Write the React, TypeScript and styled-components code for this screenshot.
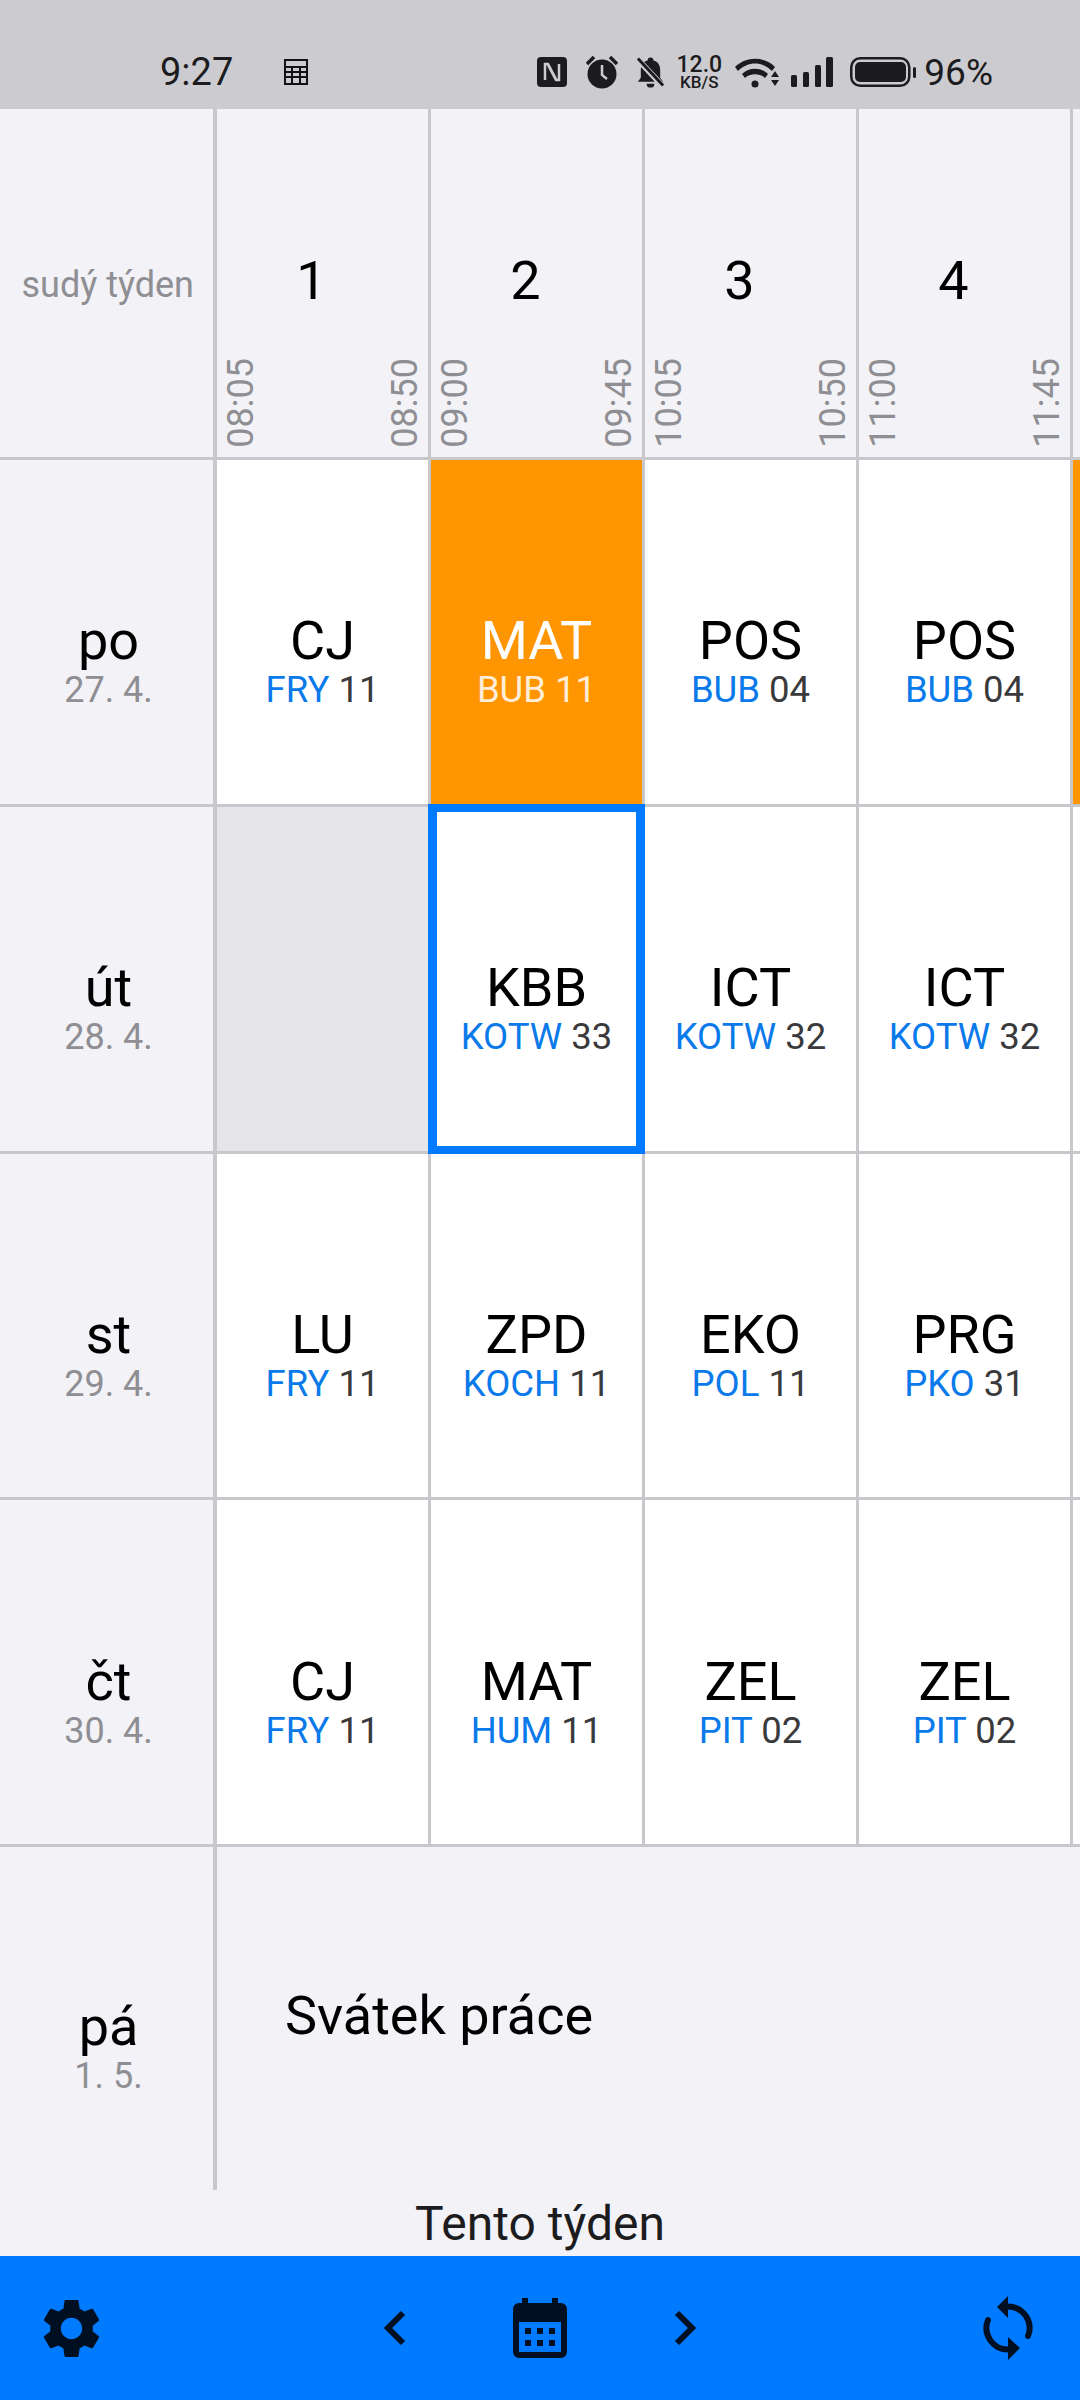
import styled, { createGlobalStyle } from "styled-components";
import { MdSettings } from "react-icons/md";

const GlobalStyle = createGlobalStyle`
  html, body {
    margin: 0;
    padding: 0;
    background: #f2f2f7;
    font-family: Roboto, "Liberation Sans", sans-serif;
  }
`;

type Lesson = { name: string; teacher: string; room: string; variant?: "changed" | "active" | "empty" };

const periods = [
  { n: 1, from: "08:05", to: "08:50" },
  { n: 2, from: "09:00", to: "09:45" },
  { n: 3, from: "10:05", to: "10:50" },
  { n: 4, from: "11:00", to: "11:45" },
];

const days: { name: string; date: string; lessons: Lesson[] }[] = [
  {
    name: "po",
    date: "27. 4.",
    lessons: [
      { name: "CJ", teacher: "FRY", room: "11" },
      { name: "MAT", teacher: "BUB", room: "11", variant: "changed" },
      { name: "POS", teacher: "BUB", room: "04" },
      { name: "POS", teacher: "BUB", room: "04" },
    ],
  },
  {
    name: "út",
    date: "28. 4.",
    lessons: [
      { name: "", teacher: "", room: "", variant: "empty" },
      { name: "KBB", teacher: "KOTW", room: "33", variant: "active" },
      { name: "ICT", teacher: "KOTW", room: "32" },
      { name: "ICT", teacher: "KOTW", room: "32" },
    ],
  },
  {
    name: "st",
    date: "29. 4.",
    lessons: [
      { name: "LU", teacher: "FRY", room: "11" },
      { name: "ZPD", teacher: "KOCH", room: "11" },
      { name: "EKO", teacher: "POL", room: "11" },
      { name: "PRG", teacher: "PKO", room: "31" },
    ],
  },
  {
    name: "čt",
    date: "30. 4.",
    lessons: [
      { name: "CJ", teacher: "FRY", room: "11" },
      { name: "MAT", teacher: "HUM", room: "11" },
      { name: "ZEL", teacher: "PIT", room: "02" },
      { name: "ZEL", teacher: "PIT", room: "02" },
    ],
  },
];

const ink = "#1c1c1e";
const statusBg = "#cbcbd0";

function StatusIcons() {
  return (
    <StatusRight>
      <StatusSvg $gap={0} width="30" height="30" viewBox="0 0 30 30">
        <rect width="30" height="30" rx="4" fill={ink} />
        <path d="M8 23V7h3l8 15M22 7v16h-3L11 8" stroke={statusBg} strokeWidth="2.5" fill="none" />
      </StatusSvg>
      <StatusSvg $gap={19} width="32" height="34" viewBox="0 0 32 34">
        <circle cx="16" cy="19" r="14.5" fill={ink} />
        <path d="M16 10v10l5 4" stroke={statusBg} strokeWidth="2.5" fill="none" />
        <path d="M1 9l7-7M31 9l-7-7" stroke={ink} strokeWidth="3.5" />
      </StatusSvg>
      <StatusSvg $gap={17} width="31" height="34" viewBox="0 0 32 34">
        <path fill={ink} d="M16 2a3 3 0 0 1 3 3c5 1 7 5 7 10v8l3 4H3l3-4v-8c0-5 2-9 7-10a3 3 0 0 1 3-3zM12 29h8a4 4 0 0 1-8 0z" />
        <path d="M3 4l26 28" stroke={statusBg} strokeWidth="6" />
        <path d="M3 3l26 28" stroke={ink} strokeWidth="3" />
      </StatusSvg>
      <Speed>
        <SpeedValue>12.0</SpeedValue>
        <SpeedUnit>KB/S</SpeedUnit>
      </Speed>
      <StatusSvg $gap={13} width="44" height="32" viewBox="0 0 44 32">
        <path fill={ink} d="M0 11C11 0 29 0 40 11l-3 4C27 5 13 5 3 15zM7 18c7-7 19-7 26 0l-3 4c-5-5-15-5-20 0z" />
        <circle cx="20" cy="28" r="3.5" fill={ink} />
        <path fill={ink} d="M40 15l4 6h-8zM40 30l4-6h-8z" />
      </StatusSvg>
      <StatusSvg $gap={12} width="42" height="30" viewBox="0 0 42 30">
        <rect x="0" y="18" width="6" height="12" rx="1.5" fill={ink} />
        <rect x="12" y="15" width="6" height="15" rx="1.5" fill={ink} />
        <rect x="24" y="8" width="6" height="22" rx="1.5" fill={ink} />
        <rect x="35" y="0" width="7" height="30" rx="1.5" fill={ink} />
      </StatusSvg>
      <StatusSvg $gap={17} width="66" height="30" viewBox="0 0 66 30">
        <rect x="1.25" y="1.25" width="58" height="27.5" rx="9" fill="none" stroke={ink} strokeWidth="2.5" />
        <rect x="5" y="5" width="51" height="20" rx="5" fill={ink} />
        <rect x="63" y="10" width="3" height="11" rx="1.5" fill={ink} />
      </StatusSvg>
      <Percent>96%</Percent>
    </StatusRight>
  );
}

export default function App() {
  return (
    <Screen>
      <GlobalStyle />
      <StatusBar>
        <Clock>9:27</Clock>
        <TableGlyph width="26" height="26" viewBox="0 0 26 26">
          <path fill="none" stroke="#111" strokeWidth="2" d="M2 1h22v24H2zM2 8h22M2 13h22M2 18h22M9 8v17M17 8v17" />
        </TableGlyph>
        <StatusIcons />
      </StatusBar>
      <Table>
        <HeaderRow>
          <WeekLabel>sudý týden</WeekLabel>
          {periods.map((p) => (
            <PeriodCell key={p.n}>
              <PeriodNumber>{p.n}</PeriodNumber>
              <Times>
                <Time>{p.from}</Time>
                <Time>{p.to}</Time>
              </Times>
            </PeriodCell>
          ))}
          <PeriodCell />
        </HeaderRow>
        {days.map((d) => (
          <DayRow key={d.name}>
            <DayCell>
              <DayName>{d.name}</DayName>
              <DayDate>{d.date}</DayDate>
            </DayCell>
            {d.lessons.map((l, i) => (
              <LessonCell key={i} $variant={l.variant}>
                {l.name && (
                  <>
                    <Subject $variant={l.variant}>{l.name}</Subject>
                    <Details>
                      <Teacher $variant={l.variant}>{l.teacher}</Teacher>{" "}
                      <Room $variant={l.variant}>{l.room}</Room>
                    </Details>
                  </>
                )}
              </LessonCell>
            ))}
            <Overflow $changed={d.name === "po"} />
          </DayRow>
        ))}
        <HolidayRow>
          <DayCell $last>
            <DayName>pá</DayName>
            <DayDate>1. 5.</DayDate>
          </DayCell>
          <Holiday>Svátek práce</Holiday>
        </HolidayRow>
      </Table>
      <WeekTitle>Tento týden</WeekTitle>
      <BottomBar>
        <MdSettings size={71} />
        <CenterNav>
          <svg width="22" height="36" viewBox="0 0 22 36">
            <path d="M19 3L4 18l15 15" fill="none" stroke="currentColor" strokeWidth="6" />
          </svg>
          <svg width="54" height="60" viewBox="0 0 54 60">
            <path
              fill="currentColor"
              fillRule="evenodd"
              d="M9 0h6v5h24V0h6v5h3a6 6 0 0 1 6 6v43a6 6 0 0 1-6 6H6a6 6 0 0 1-6-6V11a6 6 0 0 1 6-6h3zM6 24v30h42V24z"
            />
            <path fill="currentColor" d="M12 30h6v6h-6zM24 30h6v6h-6zM36 30h6v6h-6zM12 42h6v6h-6zM24 42h6v6h-6zM36 42h6v6h-6z" />
          </svg>
          <svg width="22" height="36" viewBox="0 0 22 36">
            <path d="M3 3l15 15L3 33" fill="none" stroke="currentColor" strokeWidth="6" />
          </svg>
        </CenterNav>
        <SyncIcon width="60" height="70" viewBox="0 0 60 70">
          <path d="M30 13.5A21.5 21.5 0 0 1 50 43M30 56.5A21.5 21.5 0 0 1 10 27" fill="none" stroke="currentColor" strokeWidth="6" strokeLinecap="round" />
          <path fill="currentColor" d="M19 14L30 3v22zM42 55L30 44v23z" />
        </SyncIcon>
      </BottomBar>
    </Screen>
  );
}

const line = "#c7c7cc";

const Screen = styled.div`
  width: 1080px;
  height: 2400px;
  overflow: hidden;
  display: flex;
  flex-direction: column;
  background: #f2f2f7;
`;

const StatusBar = styled.div`
  height: 109px;
  flex: none;
  background: ${statusBg};
  display: flex;
  align-items: center;
  padding: 35px 87px 0 160px;
  box-sizing: border-box;
  color: ${ink};
`;

const Clock = styled.span`
  font-size: 38px;
  width: 72px;
  white-space: nowrap;
`;

const TableGlyph = styled.svg`
  margin-left: 51px;
`;

const StatusRight = styled.div`
  margin-left: auto;
  display: flex;
  align-items: center;
`;

const StatusSvg = styled.svg<{ $gap: number }>`
  margin-left: ${(p) => p.$gap}px;
  flex: none;
`;

const Speed = styled.div`
  width: 46px;
  margin-left: 10px;
  display: flex;
  flex-direction: column;
  align-items: center;
  font-weight: 500;
`;

const SpeedValue = styled.span`
  font-size: 23px;
  line-height: 19px;
`;

const SpeedUnit = styled.span`
  font-size: 17px;
  line-height: 16px;
`;

const Percent = styled.span`
  font-size: 37px;
  margin-left: 8px;
`;

const Table = styled.div`
  flex: none;
  display: flex;
  flex-direction: column;
`;

const HeaderRow = styled.div`
  height: 351px;
  display: flex;
  border-bottom: 3px solid ${line};
  box-sizing: border-box;
`;

const WeekLabel = styled.div`
  width: 217px;
  flex: none;
  border-right: 4px solid ${line};
  box-sizing: border-box;
  display: flex;
  align-items: center;
  justify-content: flex-end;
  padding: 4px 19px 0 0;
  font-size: 36px;
  color: #8e8e93;
  white-space: nowrap;
`;

const PeriodCell = styled.div`
  width: 214px;
  flex: none;
  border-right: 3px solid ${line};
  box-sizing: border-box;
  display: flex;
  flex-direction: column;
`;

const PeriodNumber = styled.div`
  font-size: 54px;
  color: #000;
  text-align: center;
  margin-top: 140px;
  padding-right: 22px;
  line-height: 64px;
  flex: 1;
`;

const Times = styled.div`
  display: flex;
  justify-content: space-between;
  padding: 0 4px 9px 6px;
`;

const Time = styled.span`
  writing-mode: vertical-rl;
  transform: rotate(180deg);
  font-size: 36px;
  line-height: 37px;
  color: #8e8e93;
`;

const DayRow = styled.div`
  height: 346.75px;
  display: flex;
  border-bottom: 3px solid ${line};
  box-sizing: border-box;
`;

const HolidayRow = styled.div`
  height: 343px;
  display: flex;
`;

const DayCell = styled.div<{ $last?: boolean }>`
  width: 217px;
  flex: none;
  border-right: 4px solid ${line};
  box-sizing: border-box;
  display: flex;
  flex-direction: column;
  align-items: center;
  justify-content: center;
  padding: ${(p) => (p.$last ? "57px" : "60px")} 0 0 4px;
`;

const DayName = styled.div`
  font-size: 54px;
  line-height: 57px;
  color: #000;
`;

const DayDate = styled.div`
  font-size: 36px;
  line-height: 42px;
  color: #8e8e93;
`;

const LessonCell = styled.div<{ $variant?: Lesson["variant"] }>`
  width: 214px;
  flex: none;
  box-sizing: border-box;
  position: relative;
  display: flex;
  flex-direction: column;
  align-items: center;
  justify-content: center;
  border-right: 3px solid ${line};
  padding-top: 60px;
  background: ${(p) =>
    p.$variant === "changed" ? "#ff9500" : p.$variant === "empty" ? "#e5e5ea" : "#fff"};
  ${(p) =>
    p.$variant === "active" &&
    `
    &::after {
      content: "";
      position: absolute;
      inset: -3px;
      border-style: solid;
      border-color: #007aff;
      border-width: 8px 9px;
    }
    `}
`;

const Subject = styled.div<{ $variant?: Lesson["variant"] }>`
  font-size: 54px;
  line-height: 57px;
  color: ${(p) => (p.$variant === "changed" ? "#fff" : "#000")};
`;

const Details = styled.div`
  font-size: 36.5px;
  line-height: 42px;
  white-space: nowrap;
`;

const Teacher = styled.span<{ $variant?: Lesson["variant"] }>`
  color: ${(p) => (p.$variant === "changed" ? "rgba(255,255,255,0.85)" : "#0a7aeb")};
`;

const Room = styled.span<{ $variant?: Lesson["variant"] }>`
  color: ${(p) => (p.$variant === "changed" ? "rgba(255,255,255,0.85)" : "#3a3a3c")};
`;

const Overflow = styled.div<{ $changed?: boolean }>`
  flex: 1;
  background: ${(p) => (p.$changed ? "#ff9500" : "#fff")};
`;

const Holiday = styled.div`
  flex: 1;
  font-size: 54px;
  color: #000;
  padding: 137px 0 0 68px;
`;

const WeekTitle = styled.div`
  flex: 1;
  display: flex;
  align-items: center;
  justify-content: center;
  font-size: 48px;
  color: ${ink};
`;

const BottomBar = styled.div`
  height: 144px;
  flex: none;
  background: #007aff;
  color: #001022;
  display: grid;
  grid-template-columns: 1fr auto 1fr;
  align-items: center;
  padding: 0 36px;
  box-sizing: border-box;
`;

const CenterNav = styled.div`
  display: flex;
  align-items: center;
  gap: 107px;
`;

const SyncIcon = styled.svg`
  justify-self: end;
  margin-right: 6px;
`;
